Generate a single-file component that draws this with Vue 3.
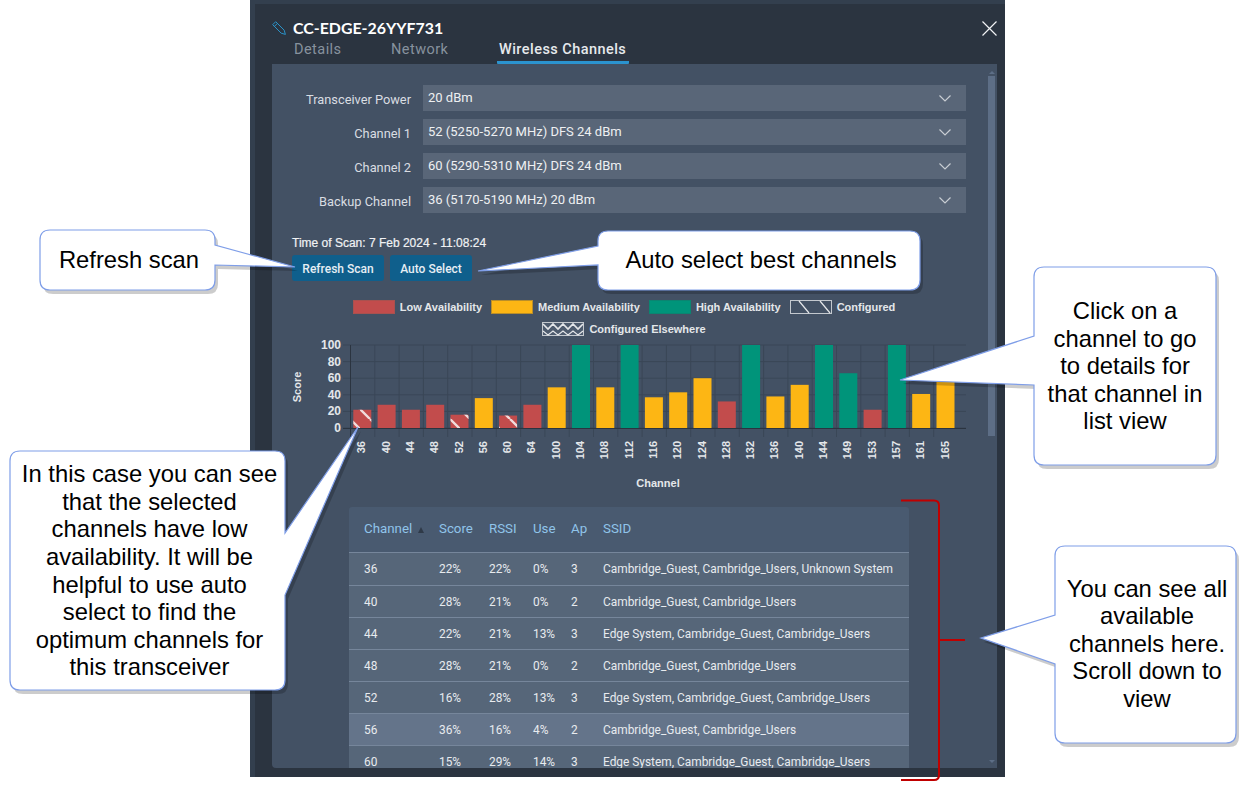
<template>
  <div class="page">
    <div class="window">
      <header class="head">
        <div class="title-row">
          <svg class="edit-icon" viewBox="0 0 14 14" aria-hidden="true">
            <path d="M0.7 3.7 L3.7 0.7 L12.2 9.2 L13.4 13.4 L9.2 12.2 Z M2.4 5.4 L5.4 2.4" />
          </svg>
          <span class="title">CC-EDGE-26YYF731</span>
        </div>
        <nav class="tabs">
          <a class="tab tab-details">Details</a>
          <a class="tab tab-network">Network</a>
          <a class="tab active">Wireless Channels</a>
        </nav>
        <svg class="close" viewBox="0 0 15 15" aria-hidden="true">
          <path d="M0.5 0.5 L14.5 14.5 M14.5 0.5 L0.5 14.5" />
        </svg>
      </header>

      <section class="content">
        <div class="scrollbar">
          <i class="arrow-up"></i>
          <div class="thumb"></div>
          <i class="arrow-down"></i>
        </div>

        <div class="form">
          <div v-for="f in fields" :key="f.label" class="field">
            <label>{{ f.label }}</label>
            <div class="select">
              <span>{{ f.value }}</span>
              <svg viewBox="0 0 12 7" aria-hidden="true"><path d="M0.5 0.5 L6 6 L11.5 0.5" /></svg>
            </div>
          </div>
        </div>

        <div class="scan-time">Time of Scan: 7 Feb 2024 - 11:08:24</div>
        <div class="actions">
          <button class="btn btn-refresh">Refresh Scan</button>
          <button class="btn btn-auto">Auto Select</button>
        </div>

        <div class="legend">
          <span class="legend-item"><i class="swatch sw-low"></i>Low Availability</span>
          <span class="legend-item"><i class="swatch sw-medium"></i>Medium Availability</span>
          <span class="legend-item"><i class="swatch sw-high"></i>High Availability</span>
          <span class="legend-item">
            <svg class="swatch-svg" viewBox="0 0 42 14" aria-hidden="true">
              <rect x="0.5" y="0.5" width="41" height="13" fill="none" stroke="#c3c8ce" />
              <path d="M9 1 L19 13 M30 1 L40 13" stroke="#e4e6e9" stroke-width="1.2" />
            </svg>
            Configured
          </span>
          <span class="legend-item">
            <svg class="swatch-svg" viewBox="0 0 42 14" aria-hidden="true">
              <rect x="0.5" y="0.5" width="41" height="13" fill="#4d5b6e" stroke="#c3c8ce" />
              <path d="M1 2 L6 7 L11 2 L16 7 L21 2 L26 7 L31 2 L36 7 L41 2" fill="none" stroke="#e4e6e9" stroke-width="1.6" />
              <path d="M1 9 L6 13 L11 9 L16 13 L21 9 L26 13 L31 9 L36 13 L41 9" fill="none" stroke="#e4e6e9" stroke-width="1.2" />
            </svg>
            Configured Elsewhere
          </span>
        </div>

        <svg class="chart" viewBox="290 338 680 156" aria-label="Channel score chart">
          <defs>
            <pattern id="stripes" patternUnits="userSpaceOnUse" width="20" height="20">
              <path d="M10 0 L20 10 M0 10 L10 20" stroke="#f1dcdc" stroke-width="2.4" />
            </pattern>
          </defs>
          <line v-for="t in ticks" :key="'h' + t" x1="343" x2="966" :y1="scoreY(t)" :y2="scoreY(t)" class="grid" />
          <line v-for="(b, i) in bars" :key="'v' + b.channel" :x1="gridX(i)" :x2="gridX(i)" y1="346" y2="438" class="grid" />
          <line x1="350.5" x2="350.5" y1="346" y2="438" class="axis" />
          <line x1="343" x2="966" y1="429.5" y2="429.5" class="axis" />
          <text v-for="t in ticks" :key="'t' + t" x="341" :y="scoreY(t) + 4" class="tick" text-anchor="end">{{ t }}</text>
          <text class="axis-title" text-anchor="middle" transform="translate(301 388) rotate(-90)">Score</text>
          <g v-for="(b, i) in bars" :key="b.channel">
            <rect :x="barX(i)" :y="scoreY(b.score)" width="18" :height="429 - scoreY(b.score)" :fill="barColor(b.score)" />
            <rect v-if="b.configured" :x="barX(i)" :y="scoreY(b.score)" width="18" :height="429 - scoreY(b.score)" fill="url(#stripes)" />
            <text class="tick-x" text-anchor="end" :transform="`translate(${barX(i) + 12} 442) rotate(-90)`">{{ b.channel }}</text>
          </g>
          <text x="658" y="488" class="axis-title" text-anchor="middle">Channel</text>
        </svg>

        <div class="table-wrap">
          <table>
            <thead>
              <tr>
                <th class="c-channel">Channel <i class="sort"></i></th>
                <th class="c-score">Score</th>
                <th class="c-rssi">RSSI</th>
                <th class="c-use">Use</th>
                <th class="c-ap">Ap</th>
                <th>SSID</th>
              </tr>
            </thead>
            <tbody>
              <tr v-for="r in rows" :key="r[0]" :class="{ hover: r[0] === 56 }">
                <td v-for="(c, i) in r" :key="i">{{ c }}</td>
              </tr>
            </tbody>
          </table>
        </div>
      </section>
    </div>

    <!-- annotation layer drawn over the screenshot -->
    <svg class="notes" viewBox="0 0 1250 790" aria-hidden="true">
      <g v-for="n in notes" :key="n.id">
        <path :d="n.d" class="note-shadow" transform="translate(3 4)" />
        <path :d="n.d" class="note-shape" />
      </g>
      <path d="M901 500.5 H934 Q939 500.5 939 505.5 V775 Q939 780 934 780 H901 M939 640 H965" class="bracket" />
    </svg>
    <div v-for="n in notes" :key="n.id" class="note-text" :class="'note-' + n.id">{{ n.text }}</div>
  </div>
</template>

<script setup>
const fields = [
  { label: "Transceiver Power", value: "20 dBm" },
  { label: "Channel 1", value: "52 (5250-5270 MHz) DFS 24 dBm" },
  { label: "Channel 2", value: "60 (5290-5310 MHz) DFS 24 dBm" },
  { label: "Backup Channel", value: "36 (5170-5190 MHz) 20 dBm" },
];

const ticks = [0, 20, 40, 60, 80, 100];

const bars = [
  { channel: 36, score: 22, configured: true },
  { channel: 40, score: 28 },
  { channel: 44, score: 22 },
  { channel: 48, score: 28 },
  { channel: 52, score: 16, configured: true },
  { channel: 56, score: 36 },
  { channel: 60, score: 15, configured: true },
  { channel: 64, score: 28 },
  { channel: 100, score: 49 },
  { channel: 104, score: 100 },
  { channel: 108, score: 49 },
  { channel: 112, score: 100 },
  { channel: 116, score: 37 },
  { channel: 120, score: 43 },
  { channel: 124, score: 60 },
  { channel: 128, score: 32 },
  { channel: 132, score: 100 },
  { channel: 136, score: 38 },
  { channel: 140, score: 52 },
  { channel: 144, score: 100 },
  { channel: 149, score: 66 },
  { channel: 153, score: 22 },
  { channel: 157, score: 100 },
  { channel: 161, score: 41 },
  { channel: 165, score: 57 },
];

const rows = [
  [36, "22%", "22%", "0%", 3, "Cambridge_Guest, Cambridge_Users, Unknown System"],
  [40, "28%", "21%", "0%", 2, "Cambridge_Guest, Cambridge_Users"],
  [44, "22%", "21%", "13%", 3, "Edge System, Cambridge_Guest, Cambridge_Users"],
  [48, "28%", "21%", "0%", 2, "Cambridge_Guest, Cambridge_Users"],
  [52, "16%", "28%", "13%", 3, "Edge System, Cambridge_Guest, Cambridge_Users"],
  [56, "36%", "16%", "4%", 2, "Cambridge_Guest, Cambridge_Users"],
  [60, "15%", "29%", "14%", 3, "Edge System, Cambridge_Guest, Cambridge_Users"],
];

// rounded box with a pointed tail, r = corner radius
function box(x1, y1, x2, y2, tail) {
  const r = 10;
  return `M${x1 + r} ${y1} H${x2 - r} Q${x2} ${y1} ${x2} ${y1 + r} ` +
    (tail.side === "right" ? `V${tail.a} L${tail.x} ${tail.y} L${x2} ${tail.b} ` : "") +
    `V${y2 - r} Q${x2} ${y2} ${x2 - r} ${y2} H${x1 + r} Q${x1} ${y2} ${x1} ${y2 - r} ` +
    (tail.side === "left" ? `V${tail.b} L${tail.x} ${tail.y} L${x1} ${tail.a} ` : "") +
    `V${y1 + r} Q${x1} ${y1} ${x1 + r} ${y1} Z`;
}

const notes = [
  {
    id: "refresh",
    text: "Refresh scan",
    d: box(40, 230, 215, 290, { side: "right", a: 245, b: 265, x: 295, y: 267 }),
  },
  {
    id: "auto",
    text: "Auto select best channels",
    d: box(598, 231, 920, 290, { side: "left", a: 246, b: 265, x: 478, y: 271 }),
  },
  {
    id: "click",
    text: "Click on a channel to go to details for that channel in list view",
    d: box(1034, 267, 1216, 465, { side: "left", a: 336, b: 385, x: 900, y: 380 }),
  },
  {
    id: "all",
    text: "You can see all available channels here. Scroll down to view",
    d: box(1055, 546, 1236, 743, { side: "left", a: 615, b: 664, x: 981, y: 638 }),
  },
  {
    id: "low",
    text: "In this case you can see that the selected channels have low availability. It will be helpful to use auto select to find the optimum channels for this transceiver",
    d: box(10, 451, 285, 690, { side: "right", a: 533, b: 595, x: 358, y: 427 }),
  },
];

const scoreY = (v) => 429 - v * 0.83;
const barX = (i) => 353.3 + i * 24.3;
const gridX = (i) => 350.5 + i * 24.3;

function barColor(score) {
  if (score < 34) return "#c24c4c";
  if (score < 62) return "#fdb614";
  return "#00947a";
}
</script>

<style>
html,
body {
  margin: 0;
  background: #fff;
}
</style>

<style scoped>
.page {
  position: relative;
  width: 1250px;
  height: 790px;
  overflow: hidden;
  background: #fff;
  font-family: Roboto, "Liberation Sans", sans-serif;
}

.window {
  box-sizing: border-box;
  width: 755px;
  height: 777px;
  margin-left: 250px;
  padding: 4px 8px 9px 22px;
  display: flex;
  flex-direction: column;
  background: #2b3440;
  box-shadow: inset 5px 4px 0 #333f4e;
}

.head {
  position: relative;
  height: 60px;
  flex: none;
}

.title-row {
  display: flex;
  align-items: center;
  gap: 7px;
  padding-top: 15px;
  height: 17px;
}

.edit-icon {
  width: 14px;
  height: 14px;
  fill: none;
  stroke: #2a93c9;
  stroke-width: 1;
}

.title {
  color: #fff;
  font-family: Lato, sans-serif;
  font-weight: 700;
  font-size: 15.9px;
}

.tabs {
  display: flex;
  margin-top: 3px;
  height: 25px;
  font-size: 14.5px;
  letter-spacing: 0.45px;
  color: #87929e;
}

.tab {
  box-sizing: border-box;
  height: 25px;
  padding: 2px 1px 0 2px;
  border-bottom: 3px solid transparent;
}

.tab-details {
  width: 94px;
  margin-left: 20px;
}

.tab-network {
  width: 108px;
  margin-left: 3px;
}

.tab.active {
  width: 132px;
  padding-left: 2px;
  color: #e6e9ec;
  font-weight: 500;
  white-space: nowrap;
  border-bottom-color: #2b93cf;
  border-radius: 1px;
}

.close {
  position: absolute;
  top: 17px;
  right: 0;
  width: 15px;
  height: 15px;
  fill: none;
  stroke: #f1f3f5;
  stroke-width: 1.2;
}

.content {
  position: relative;
  flex: 1;
  min-height: 0;
  overflow: hidden;
  background: #435164;
  border-radius: 0 0 0 4px;
  padding-top: 21px;
}

.scrollbar {
  position: absolute;
  top: 0;
  right: 2px;
  bottom: 0;
  width: 7px;
}

.thumb {
  position: absolute;
  top: 12px;
  left: 0;
  width: 7px;
  height: 360px;
  background: #5d6e86;
}

.arrow-up,
.arrow-down {
  position: absolute;
  left: 1px;
  border-left: 3px solid transparent;
  border-right: 3px solid transparent;
}

.arrow-up {
  top: 7px;
  border-bottom: 3px solid #5d6e86;
}

.arrow-down {
  bottom: 5px;
  border-top: 3px solid #5d6e86;
}

.form {
  display: flex;
  flex-direction: column;
  gap: 8px;
  margin-right: 31px;
}

.field {
  display: flex;
  align-items: center;
  height: 26px;
}

.field label {
  width: 139px;
  flex: none;
  padding-top: 3px;
  text-align: right;
  font-size: 12.8px;
  color: #d9dde2;
}

.select {
  flex: 1;
  height: 26px;
  margin-left: 12px;
  padding: 0 15px 0 5px;
  display: flex;
  align-items: center;
  justify-content: space-between;
  background: #596678;
  font-size: 13px;
  color: #eef0f2;
}

.select span {
  padding-bottom: 2px;
}

.select svg {
  width: 12px;
  height: 7px;
  fill: none;
  stroke: #c7ccd2;
  stroke-width: 1.2;
}

.scan-time {
  margin: 23px 0 0 20px;
  height: 14px;
  font-family: "Liberation Sans", sans-serif;
  font-size: 12px;
  line-height: 14px;
  color: #f0f2f4;
  -webkit-text-stroke: 0.2px #f0f2f4;
}

.actions {
  display: flex;
  gap: 6px;
  margin: 5px 0 0 20px;
}

.btn {
  height: 26px;
  padding: 2px 0 0;
  border: 0;
  border-radius: 3px;
  background: #0f5f8c;
  color: #e6eef4;
  font-family: Roboto, sans-serif;
  font-size: 12px;
  font-weight: 500;
}

.btn-refresh {
  width: 92px;
}

.btn-auto {
  width: 82px;
}

.legend {
  display: flex;
  flex-wrap: wrap;
  justify-content: center;
  column-gap: 9px;
  row-gap: 8px;
  width: 600px;
  margin: 19px 0 0 52px;
  font-family: "Liberation Sans", sans-serif;
  font-size: 11px;
  font-weight: 700;
  color: #e4e7ea;
}

.legend-item {
  display: flex;
  align-items: center;
  gap: 5px;
  height: 14px;
}

.swatch {
  box-sizing: border-box;
  width: 42px;
  height: 14px;
  border: 1px solid;
}

.swatch-svg {
  width: 42px;
  height: 14px;
}

.sw-low {
  background: #c24c4c;
  border-color: #a9514f;
}

.sw-medium {
  background: #fdb614;
  border-color: #b98e2a;
}

.sw-high {
  background: #00947a;
  border-color: #0b8571;
}

.chart {
  display: block;
  width: 680px;
  height: 156px;
  margin: 1px 0 0 18px;
}

.grid {
  stroke: #3a4757;
  stroke-width: 1;
}

.axis {
  stroke: #2b3440;
  stroke-width: 1;
}

.tick,
.tick-x,
.axis-title {
  font-family: "Liberation Sans", sans-serif;
  font-size: 12px;
  font-weight: 700;
  fill: #e4e7ea;
}

.tick-x {
  font-size: 11px;
}

.axis-title {
  font-size: 11px;
}

.table-wrap {
  width: 560px;
  margin: 14px 0 0 77px;
  border-radius: 3px 3px 0 0;
  overflow: hidden;
}

table {
  width: 100%;
  border-collapse: collapse;
  table-layout: fixed;
  font-size: 11.9px;
  color: #e8ebef;
}

th {
  height: 45px;
  padding: 0 0 2px 15px;
  box-sizing: border-box;
  text-align: left;
  font-weight: 400;
  font-size: 13.3px;
  white-space: nowrap;
  color: #90c4ea;
  background: #495a70;
}

td {
  height: 32px;
  padding: 1px 0 0 15px;
  box-sizing: border-box;
  white-space: nowrap;
  background: #566679;
  border-top: 1px solid #76869b;
}

tbody tr:first-child td {
  height: 33px;
  padding-top: 0;
}

.c-channel {
  width: 75px;
}

.c-score {
  width: 50px;
}

.c-rssi {
  width: 44px;
}

.c-use {
  width: 38px;
}

.c-ap {
  width: 32px;
}

.sort {
  display: inline-block;
  margin-left: 3px;
  border-left: 3.5px solid transparent;
  border-right: 3.5px solid transparent;
  border-bottom: 6px solid #2f3a48;
}

tr.hover td {
  background: #64748a;
}

.notes {
  position: absolute;
  top: 0;
  left: 0;
  width: 1250px;
  height: 790px;
  pointer-events: none;
}

.note-shadow {
  fill: rgba(0, 0, 0, 0.2);
}

.note-shape {
  fill: #fff;
  stroke: #7f9ee8;
  stroke-width: 1.2;
}

.bracket {
  fill: none;
  stroke: #c00000;
  stroke-width: 2;
}

.note-text {
  position: absolute;
  box-sizing: border-box;
  display: flex;
  align-items: center;
  justify-content: center;
  text-align: center;
  font-family: "Liberation Sans", sans-serif;
  font-size: 23.8px;
  line-height: 27.6px;
  color: #000;
}

.note-refresh {
  left: 40px;
  top: 230px;
  width: 178px;
  height: 60px;
}

.note-auto {
  left: 598px;
  top: 230px;
  width: 326px;
  height: 59px;
}

.note-click {
  left: 1034px;
  top: 267px;
  width: 182px;
  height: 198px;
  padding: 0 11px;
}

.note-all {
  left: 1055px;
  top: 545px;
  width: 184px;
  height: 197px;
  padding: 0 6px;
}

.note-low {
  left: 10px;
  top: 451px;
  width: 279px;
  height: 239px;
  padding: 0 10px;
}
</style>
